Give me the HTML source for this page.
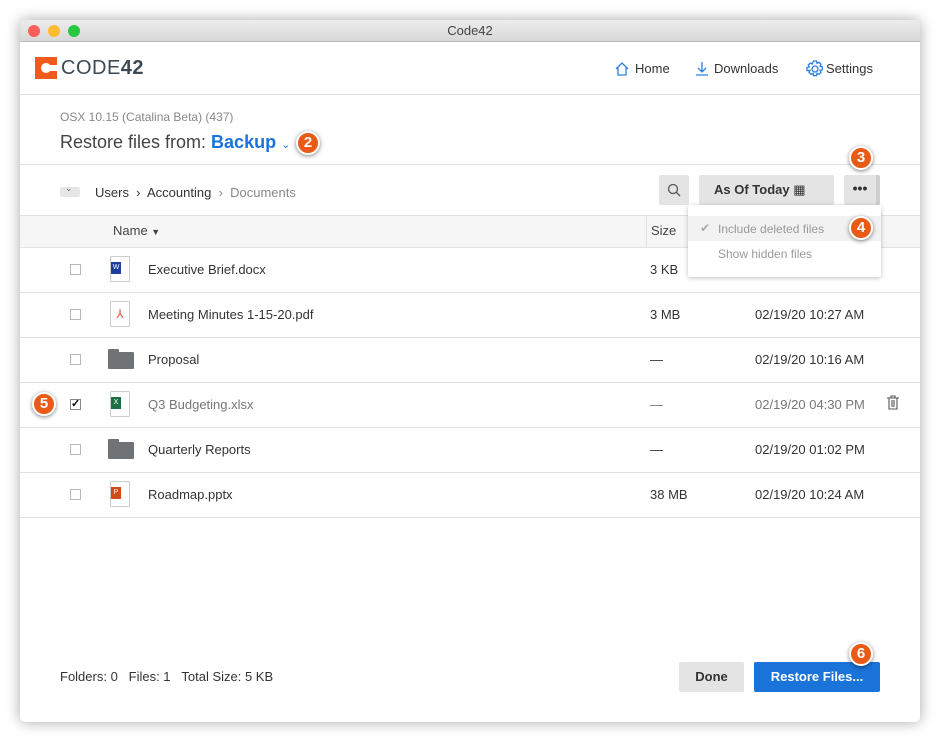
<!DOCTYPE html>
<html><head><meta charset="utf-8"><style>
*{margin:0;padding:0;box-sizing:border-box}
body{width:940px;height:742px;background:#fff;font-family:"Liberation Sans",sans-serif;position:relative;overflow:hidden;color:#333}
.a{position:absolute}
.win{left:20px;top:20px;width:900px;height:702px;background:#fff;box-shadow:0 0 14px rgba(0,0,0,.35);border-radius:5px;overflow:hidden}
.tb{left:0;top:0;width:900px;height:22px;background:linear-gradient(#ececec,#d8d8d8);border-bottom:1px solid #bbb;text-align:center;font-size:13px;line-height:22px;color:#444}
.dot{width:12px;height:12px;border-radius:50%;top:5px}
.hl{height:1px;background:#e2e2e2}
.cb{width:11px;height:11px;border:1px solid #b8b8b8;background:#fff;left:50px}
.nm{left:128px;font-size:13px;color:#333}
.sz{left:630px;font-size:13px;color:#333}
.dt{left:735px;font-size:13px;color:#333}
.doc{width:20px;height:26px;left:90px;border:1px solid #ccc;background:#fff;border-radius:1px}
.fold{left:88px;width:26px;height:17px;background:#707375;border-radius:1px}
.fold:before{content:"";position:absolute;left:0;top:-3px;width:11px;height:4px;background:#707375;border-radius:1px 1px 0 0}
.bd{width:24px;height:24px;border-radius:50%;background:#ea5a17;border:2px solid #fff;box-shadow:0 1px 4px rgba(0,0,0,.5);color:#fff;font-weight:bold;font-size:15px;text-align:center;line-height:20px;z-index:5}
.btn{background:#e4e4e4;border-radius:2px}
</style></head><body>
<div class="a win">
 <div class="a tb">Code42</div>
 <div class="a dot" style="left:8px;background:#fc5f57"></div>
 <div class="a dot" style="left:28px;background:#fdbc2e"></div>
 <div class="a dot" style="left:48px;background:#28c840"></div>

 <div class="a" style="left:15px;top:37px;width:22px;height:22px;background:#f05a1c"></div>
 <div class="a" style="left:21px;top:43px;width:10px;height:10px;border-radius:50%;background:#fff"></div>
 <div class="a" style="left:26px;top:45px;width:11px;height:6px;background:#fff"></div>
 <div class="a" style="left:41px;top:37px;font-size:20px;color:#3c4a55;letter-spacing:0.5px;line-height:22px">CODE<b>42</b></div>

 <svg class="a" style="left:594px;top:41px" width="16" height="16" viewBox="0 0 16 16" fill="none" stroke="#2a7de1" stroke-width="1.3"><path d="M2 8L8 2l6 6M4 7v7h8V7"/></svg>
 <div class="a" style="left:615px;top:41px;font-size:13px;color:#333">Home</div>
 <svg class="a" style="left:675px;top:41px" width="14" height="16" viewBox="0 0 14 16" fill="none" stroke="#2a7de1" stroke-width="1.3"><path d="M7 1v10M3 7l4 4 4-4M1 14h12"/></svg>
 <div class="a" style="left:694px;top:41px;font-size:13px;color:#333">Downloads</div>
 <svg class="a" style="left:785px;top:39px" width="20" height="20" viewBox="0 0 20 20" fill="none" stroke="#2a7de1" stroke-width="1.3"><circle cx="10" cy="10" r="3"/><path d="M8.5 2h3l.5 2.3 2-1 2 2-1 2 2.3.5v3l-2.3.5 1 2-2 2-2-1-.5 2.3h-3l-.5-2.3-2 1-2-2 1-2L2 11.5v-3l2.3-.5-1-2 2-2 2 1z"/></svg>
 <div class="a" style="left:806px;top:41px;font-size:13px;color:#333">Settings</div>
 <div class="a hl" style="left:0;top:74px;width:900px"></div>

 <div class="a" style="left:40px;top:90px;font-size:12px;color:#888">OSX 10.15 (Catalina Beta) (437)</div>
 <div class="a" style="left:40px;top:112px;font-size:18px;color:#444">Restore files from: <b style="color:#1a73d9">Backup</b> <span style="color:#1a73d9;font-size:11px">&#8964;</span></div>
 <div class="a bd" style="left:276px;top:111px">2</div>
 <div class="a hl" style="left:0;top:144px;width:900px"></div>

 <div class="a btn" style="left:40px;top:167px;width:20px;height:10px;background:#e6e6e6"></div>
 <div class="a" style="left:45px;top:163px;font-size:9px;color:#666">&#8964;</div>
 <div class="a" style="left:75px;top:165px;font-size:13px;color:#333">Users &nbsp;›&nbsp; Accounting &nbsp;<span style="color:#888">›&nbsp; Documents</span></div>

 <div class="a btn" style="left:639px;top:155px;width:30px;height:30px"></div>
 <svg class="a" style="left:647px;top:163px" width="14" height="14" viewBox="0 0 14 14" fill="none" stroke="#555" stroke-width="1.3"><circle cx="6" cy="6" r="4.5"/><path d="M9.3 9.3L13 13"/></svg>
 <div class="a btn" style="left:679px;top:155px;width:135px;height:30px;font-size:13px;font-weight:bold;color:#333;line-height:30px;padding-left:15px">As Of Today <span style="font-weight:normal">&#9638;</span></div>
 <div class="a btn" style="left:824px;top:155px;width:36px;height:30px;border-right:4px solid #cfcfcf;font-weight:bold;font-size:14px;text-align:center;line-height:26px;color:#333">•••</div>
 <div class="a bd" style="left:829px;top:126px">3</div>

 <div class="a" style="left:0;top:195px;width:900px;height:33px;background:#f6f6f6;border-top:1px solid #e2e2e2;border-bottom:1px solid #e2e2e2"></div>
 <div class="a" style="left:93px;top:203px;font-size:13px;color:#444">Name <span style="font-size:9px">▼</span></div>
 <div class="a" style="left:626px;top:196px;width:1px;height:31px;background:#e2e2e2"></div>
 <div class="a" style="left:631px;top:203px;font-size:13px;color:#444">Size</div>

 <div class="a" style="left:668px;top:185px;width:193px;height:72px;background:#fff;box-shadow:0 1px 5px rgba(0,0,0,.25);border-radius:2px;z-index:3">
  <div class="a" style="left:0;top:11px;width:193px;height:25px;background:#f2f2f2"></div>
  <div class="a" style="left:12px;top:16px;font-size:12px;color:#aaa">✔</div>
  <div class="a" style="left:30px;top:17px;font-size:12px;color:#999">Include deleted files</div>
  <div class="a" style="left:30px;top:42px;font-size:12px;color:#999">Show hidden files</div>
 </div>
 <div class="a bd" style="left:829px;top:196px">4</div>

 <div class="a cb" style="top:244px"></div>
 <div class="a doc" style="top:236px"><div class="a" style="left:0;top:5px;width:10px;height:12px;background:#1c3f9e;color:#fff;font-size:7px;text-align:center;line-height:12px">W</div></div>
 <div class="a nm" style="top:242px">Executive Brief.docx</div>
 <div class="a sz" style="top:242px">3 KB</div>
 <div class="a hl" style="left:0;top:272px;width:900px"></div>

 <div class="a cb" style="top:289px"></div>
 <div class="a doc" style="top:281px;color:#e0543e;font-size:12px;text-align:center;line-height:24px">⅄</div>
 <div class="a nm" style="top:287px">Meeting Minutes 1-15-20.pdf</div>
 <div class="a sz" style="top:287px">3 MB</div>
 <div class="a dt" style="top:287px">02/19/20 10:27 AM</div>
 <div class="a hl" style="left:0;top:317px;width:900px"></div>

 <div class="a cb" style="top:334px"></div>
 <div class="a fold" style="top:332px"></div>
 <div class="a nm" style="top:332px">Proposal</div>
 <div class="a sz" style="top:332px">—</div>
 <div class="a dt" style="top:332px">02/19/20 10:16 AM</div>
 <div class="a hl" style="left:0;top:362px;width:900px"></div>

 <div class="a cb" style="top:379px;border-color:#888;font-size:11px;line-height:9px;text-align:center;color:#000;font-weight:bold">✓</div>
 <div class="a bd" style="left:12px;top:372px">5</div>
 <div class="a doc" style="top:371px"><div class="a" style="left:0;top:5px;width:10px;height:12px;background:#1d7044;color:#fff;font-size:7px;text-align:center;line-height:12px">X</div></div>
 <div class="a nm" style="top:377px;color:#777">Q3 Budgeting.xlsx</div>
 <div class="a sz" style="top:377px;color:#777">—</div>
 <div class="a dt" style="top:377px;color:#777">02/19/20 04:30 PM</div>
 <svg class="a" style="left:866px;top:375px" width="14" height="15" viewBox="0 0 14 15" fill="none" stroke="#555" stroke-width="1.1"><path d="M1 3h12M5 3V1h4v2M3 3v11h8V3M6 5v7M8 5v7"/></svg>
 <div class="a hl" style="left:0;top:407px;width:900px"></div>

 <div class="a cb" style="top:424px"></div>
 <div class="a fold" style="top:422px"></div>
 <div class="a nm" style="top:422px">Quarterly Reports</div>
 <div class="a sz" style="top:422px">—</div>
 <div class="a dt" style="top:422px">02/19/20 01:02 PM</div>
 <div class="a hl" style="left:0;top:452px;width:900px"></div>

 <div class="a cb" style="top:469px"></div>
 <div class="a doc" style="top:461px"><div class="a" style="left:0;top:5px;width:10px;height:12px;background:#d04a1a;color:#fff;font-size:7px;text-align:center;line-height:12px">P</div></div>
 <div class="a nm" style="top:467px">Roadmap.pptx</div>
 <div class="a sz" style="top:467px">38 MB</div>
 <div class="a dt" style="top:467px">02/19/20 10:24 AM</div>
 <div class="a hl" style="left:0;top:497px;width:900px"></div>

 <div class="a" style="left:40px;top:649px;font-size:13px;color:#333">Folders: 0 &nbsp;&nbsp;Files: 1 &nbsp;&nbsp;Total Size: 5 KB</div>
 <div class="a btn" style="left:659px;top:642px;width:65px;height:30px;font-size:13px;font-weight:bold;text-align:center;line-height:30px;color:#333">Done</div>
 <div class="a" style="left:734px;top:642px;width:126px;height:30px;background:#1a73d9;border-radius:2px;font-size:13px;font-weight:bold;text-align:center;line-height:30px;color:#fff">Restore Files...</div>
 <div class="a bd" style="left:829px;top:622px">6</div>
</div>
</body></html>
